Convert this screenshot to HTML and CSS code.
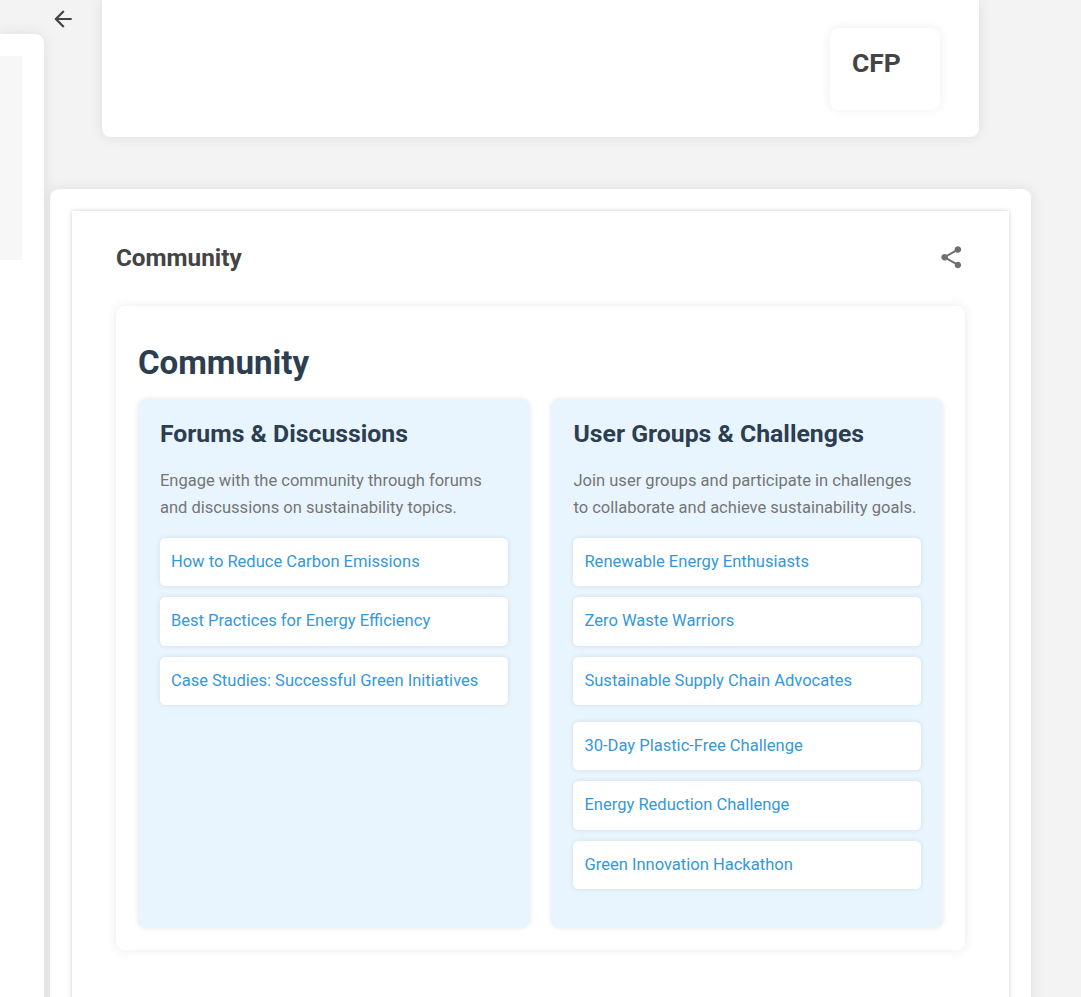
FILE: index.html
```html
<!DOCTYPE html>
<html lang="en">
<head>
<meta charset="utf-8">
<title>Community</title>
<link rel="stylesheet" href="styles.css">
</head>
<body>
<div class="page">
  <aside class="side"><div class="side-block"></div></aside>
  <main class="main">
    <div class="top-row">
      <svg class="back" viewBox="0 0 24 24"><path d="M20 11H7.83l5.59-5.59L12 4l-8 8 8 8 1.41-1.41L7.83 13H20v-2z"/></svg>
      <section class="top-card"><div class="cfp">CFP</div></section>
    </div>
    <section class="outer">
      <div class="sheet">
        <header class="head">
          <h3 class="head-title">Community</h3>
          <svg class="share" viewBox="0 0 24 24"><path d="M18 16.08c-.76 0-1.44.3-1.96.77L8.91 12.7c.05-.23.09-.46.09-.7s-.04-.47-.09-.7l7.05-4.11c.54.5 1.25.81 2.04.81 1.66 0 3-1.34 3-3s-1.34-3-3-3-3 1.34-3 3c0 .24.04.47.09.7L8.04 9.81C7.5 9.31 6.79 9 6 9c-1.66 0-3 1.34-3 3s1.34 3 3 3c.79 0 1.5-.31 2.04-.81l7.12 4.16c-.05.21-.08.43-.08.65 0 1.61 1.31 2.92 2.92 2.92s2.92-1.31 2.92-2.92-1.31-2.92-2.92-2.92z"/></svg>
        </header>
        <article class="card">
          <h1 class="title">Community</h1>
          <div class="columns">
            <section class="column">
              <h2 class="subtitle">Forums &amp; Discussions</h2>
              <p class="text">Engage with the community through forums and discussions on sustainability topics.</p>
              <ul class="list">
                <li class="item">How to Reduce Carbon Emissions</li>
                <li class="item">Best Practices for Energy Efficiency</li>
                <li class="item">Case Studies: Successful Green Initiatives</li>
              </ul>
            </section>
            <section class="column">
              <h2 class="subtitle">User Groups &amp; Challenges</h2>
              <p class="text">Join user groups and participate in challenges to collaborate and achieve sustainability goals.</p>
              <ul class="list">
                <li class="item">Renewable Energy Enthusiasts</li>
                <li class="item">Zero Waste Warriors</li>
                <li class="item">Sustainable Supply Chain Advocates</li>
              </ul>
              <ul class="list">
                <li class="item">30-Day Plastic-Free Challenge</li>
                <li class="item">Energy Reduction Challenge</li>
                <li class="item">Green Innovation Hackathon</li>
              </ul>
            </section>
          </div>
        </article>
      </div>
    </section>
  </main>
</div>
</body>
</html>
```
FILE: styles.css
```css
* { box-sizing: border-box; }
body {
  margin: 0;
  background: #f3f3f3;
  font-family: Roboto, "Liberation Sans", sans-serif;
  font-size: 16.54px;
  line-height: 1.6;
  color: #444;
  overflow: hidden;
}
h1, h2, h3, p, ul { margin: 0; padding: 0; }
.page {
  display: grid;
  grid-template-columns: 44px 1fr;
  height: 997px;
  overflow: hidden;
}
.side {
  margin-top: 34px;
  padding: 22px 22px 0 0;
  background: #fff;
  border-radius: 0 8.8px 0 0;
  box-shadow: 0 0 14px rgba(0, 0, 0, .09);
}
.side-block { height: 204px; background: #f7f7f7; }
.main { padding-left: 5.9px; }
.top-row { display: flex; height: 137px; }
.back { width: 26px; height: 26px; margin: 6px 0 0 -.4px; fill: #444; }
.top-card {
  width: 876.5px;
  margin-left: 26.9px;
  padding: 28px 39px 0 0;
  background: #fff;
  border-radius: 0 0 8.8px 8.8px;
  box-shadow: 0 0 14px rgba(0, 0, 0, .09);
}
.cfp {
  width: 110px;
  height: 81.5px;
  margin-left: auto;
  padding: 14px 22px;
  border-radius: 8.8px;
  box-shadow: 0 0 11px rgba(0, 0, 0, .07);
  font-size: 26.5px;
  font-weight: 700;
}
.outer {
  width: 981.6px;
  height: 900px;
  margin-top: 52px;
  padding: 21.5px 22px;
  background: #fff;
  border-radius: 8.8px;
  box-shadow: 0 0 14px rgba(0, 0, 0, .09);
}
.sheet {
  height: 900px;
  padding: 0 44px;
  background: #fff;
  box-shadow: 0 0 4.4px rgba(0, 0, 0, .2);
}
.head {
  display: flex;
  align-items: center;
  justify-content: space-between;
  height: 95.5px;
}
.head-title { font-size: 24.3px; font-weight: 700; }
.share { width: 26.5px; height: 26.5px; margin: 0 .5px 1.5px 0; fill: #707070; }
.card {
  height: 644px;
  padding: 22px;
  border-radius: 8.8px;
  box-shadow: 0 0 11px rgba(0, 0, 0, .09);
}
.title {
  height: 71px;
  padding-top: 9px;
  font-size: 33.1px;
  color: #2c3e50;
}
.columns {
  display: grid;
  grid-template-columns: 1fr 1fr;
  gap: 21.5px;
  height: 529px;
}
.column {
  padding: 15px 22px;
  background: #e8f5ff;
  border-radius: 8.8px;
  box-shadow: 0 0 5.5px rgba(0, 0, 0, .1);
}
.subtitle { font-size: 24.8px; color: #2c3e50; }
.text { margin: 14.6px 0 16.7px; color: #757575; }
.list { display: grid; gap: 11.1px; list-style: none; }
.list + .list { margin-top: 16.3px; }
.item {
  padding: 11px;
  background: #fff;
  border-radius: 5.5px;
  box-shadow: 0 0 5.5px rgba(0, 0, 0, .1);
  color: #3498db;
}
```
